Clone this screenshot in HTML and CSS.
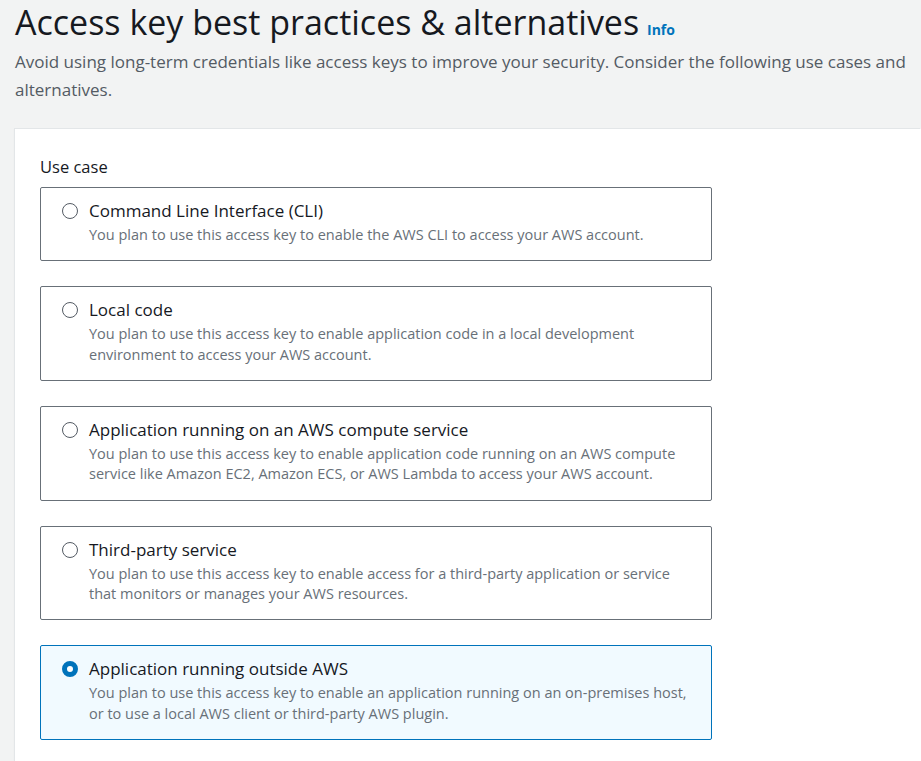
FILE: index.html
```html
<!DOCTYPE html>
<html lang="en">
<head>
<meta charset="utf-8">
<title>Access key best practices &amp; alternatives</title>
<link rel="stylesheet" href="styles.css">
</head>
<body>
<div class="page">
  <header class="header">
    <h1 class="title">Access key best practices &amp; alternatives <a class="info" href="#">Info</a></h1>
    <p class="lead">Avoid using long-term credentials like access keys to improve your security. Consider the following use cases and alternatives.</p>
  </header>
  <section class="panel">
    <div class="label">Use case</div>
    <div class="options">
      <label class="option">
        <span class="radio"></span>
        <span class="text">
          <span class="opt-title">Command Line Interface (CLI)</span>
          <span class="opt-desc">You plan to use this access key to enable the AWS CLI to access your AWS account.</span>
        </span>
      </label>
      <label class="option">
        <span class="radio"></span>
        <span class="text">
          <span class="opt-title">Local code</span>
          <span class="opt-desc">You plan to use this access key to enable application code in a local development environment to access your AWS account.</span>
        </span>
      </label>
      <label class="option">
        <span class="radio"></span>
        <span class="text">
          <span class="opt-title">Application running on an AWS compute service</span>
          <span class="opt-desc">You plan to use this access key to enable application code running on an AWS compute service like Amazon EC2, Amazon ECS, or AWS Lambda to access your AWS account.</span>
        </span>
      </label>
      <label class="option">
        <span class="radio"></span>
        <span class="text">
          <span class="opt-title">Third-party service</span>
          <span class="opt-desc">You plan to use this access key to enable access for a third-party application or service that monitors or manages your AWS resources.</span>
        </span>
      </label>
      <label class="option selected">
        <span class="radio checked"></span>
        <span class="text">
          <span class="opt-title">Application running outside AWS</span>
          <span class="opt-desc">You plan to use this access key to enable an application running on an on-premises host, or to use a local AWS client or third-party AWS plugin.</span>
        </span>
      </label>
    </div>
  </section>
</div>
</body>
</html>
```

FILE: styles.css
```css
html, body {
  margin: 0;
  padding: 0;
  background: #f2f3f3;
}
body {
  font-family: "Open Sans", "Liberation Sans", sans-serif;
  color: #16191f;
  overflow-x: hidden;
}
.page {
  padding-left: 15px;
}
.header {
  padding-right: 6px;
}
.title {
  margin: 0;
  padding-top: 1px;
  font-size: 34px;
  line-height: 43px;
  font-weight: 400;
  color: #16191f;
}
.info {
  font-size: 14px;
  font-weight: 700;
  color: #0073bb;
  text-decoration: none;
  margin-left: -1px;
}
.lead {
  margin: -3px 0 0;
  font-size: 17px;
  line-height: 28px;
  color: #545b64;
}
.panel {
  margin-top: 25px;
  background: #fff;
  box-shadow: -1px -1px 0 #e3e6e8, -1px 0 1px rgba(0,0,0,0.06);
  padding: 27px 0 24px 25px;
}
.label {
  font-size: 16.5px;
  line-height: 22px;
  color: #16191f;
  margin-bottom: 9px;
}
.options {
  display: flex;
  flex-direction: column;
  gap: 25px;
  width: 672px;
}
.option {
  display: flex;
  gap: 11px;
  border: 1px solid #687078;
  border-radius: 2px;
  padding: 11px 18px 15px 21px;
  cursor: pointer;
}
.option.selected {
  background: #f1faff;
  border-color: #0073bb;
}
.radio {
  flex: none;
  width: 14px;
  height: 14px;
  border: 1.5px solid #545b64;
  border-radius: 50%;
  margin-top: 4px;
  box-sizing: content-box;
}
.radio.checked {
  width: 6px;
  height: 6px;
  border: 5.5px solid #0073bb;
  background: #fff;
}
.text {
  display: flex;
  flex-direction: column;
}
.opt-title {
  font-size: 17px;
  line-height: 24px;
  color: #16191f;
}
.opt-desc {
  margin-top: 2px;
  font-size: 14.5px;
  line-height: 20.33px;
  color: #687078;
}
```
